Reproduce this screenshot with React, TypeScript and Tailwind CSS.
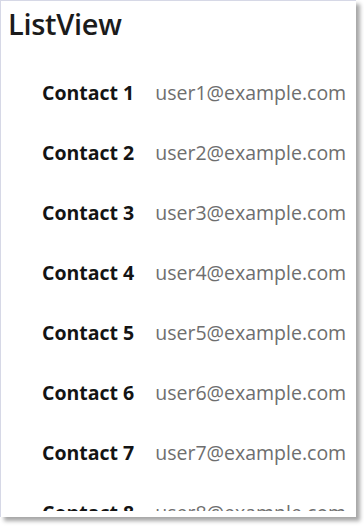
import React from 'react';

const contacts = Array.from({ length: 10 }, (_, i) => ({
  name: `Contact ${i + 1}`,
  email: `user${i + 1}@example.com`,
}));

export default function App() {
  return (
    <div className="w-[364px] h-[527px] bg-white font-['Open_Sans',sans-serif]">
      <div className="flex flex-col w-[356px] h-[517px] pb-[6px] bg-white border-l border-t border-[#d6d8e6] shadow-[4px_4px_4px_rgba(0,0,0,0.35)]">
        <div className="flex-1 overflow-hidden">
          <h2 className="pl-[7px] pt-[4px] text-[29px] leading-[38px] font-semibold text-[#1b1b1b] tracking-[-0.3px]">
            ListView
          </h2>
          <ul className="mt-[20px] pl-[41px]">
            {contacts.map((c) => (
              <li key={c.name} className="flex items-center h-[60px] text-[19.5px]">
                <span className="font-bold text-[#141414] mr-[21px]">{c.name}</span>
                <span className="text-[#6e6e6e]">{c.email}</span>
              </li>
            ))}
          </ul>
        </div>
      </div>
    </div>
  );
}
